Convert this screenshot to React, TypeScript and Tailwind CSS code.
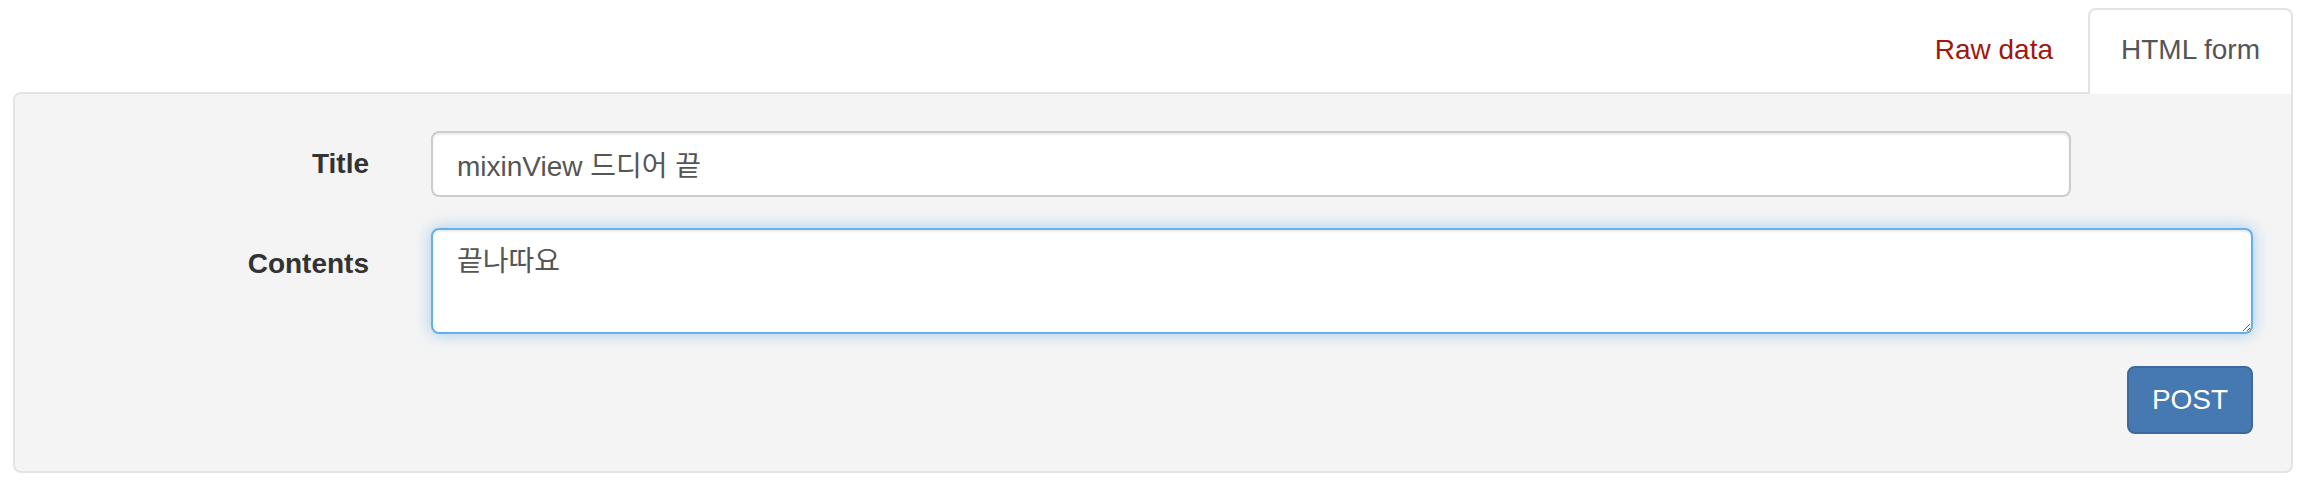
import * as React from 'react';

const font = { fontFamily: '"Liberation Sans", Arial, "Noto Sans CJK KR", sans-serif' };

export default function App() {
  return (
    <div className="bg-white w-[2318px] h-[500px] pt-[8px] text-[28px]" style={font}>
      {/* tabs */}
      <div className="flex justify-end pr-[25px] relative z-10">
        <div className="px-[31px] py-[20px] leading-[40px] text-[#a0180e] border-2 border-transparent mr-[2px]">
          Raw data
        </div>
        <div className="px-[31px] pt-[20px] pb-[22px] leading-[40px] text-[#555] bg-white border-2 border-b-0 border-[#e3e3e3] rounded-t-[8px] -mb-[2px]">
          HTML form
        </div>
      </div>

      {/* well */}
      <div className="ml-[13px] mr-[25px] border-2 border-[#e3e3e3] rounded-[8px] rounded-tr-none bg-[#f4f4f4] pt-[37px] pb-[37px] pr-[38px]">
        <div className="flex items-start">
          <label className="w-[354px] text-right font-bold text-[#333] leading-[66px]">Title</label>
          <input
            className="ml-[62px] w-[1640px] h-[66px] px-[24px] border-2 border-[#ccc] rounded-[8px] bg-white text-[#555] outline-none shadow-[inset_0_2px_2px_rgba(0,0,0,0.075)]"
            style={font}
            defaultValue="mixinView 드디어 끝"
          />
        </div>
        <div className="flex items-start mt-[31px]">
          <label className="w-[354px] text-right font-bold text-[#333] leading-[40px] pt-[16px]">Contents</label>
          <textarea
            className="ml-[62px] flex-1 h-[106px] px-[24px] py-[12px] leading-[40px] border-2 border-[#66afe9] rounded-[8px] bg-white text-[#555] outline-none shadow-[inset_0_2px_2px_rgba(0,0,0,0.075),0_0_16px_rgba(102,175,233,0.6)]"
            style={font}
            defaultValue="끝나따요"
          />
        </div>
        <div className="flex justify-end mt-[32px]">
          <button className="w-[126px] h-[68px] bg-[#4679b1] border-2 border-[#3d6a9d] rounded-[8px] text-white leading-[40px]" style={font}>
            POST
          </button>
        </div>
      </div>
    </div>
  );
}
